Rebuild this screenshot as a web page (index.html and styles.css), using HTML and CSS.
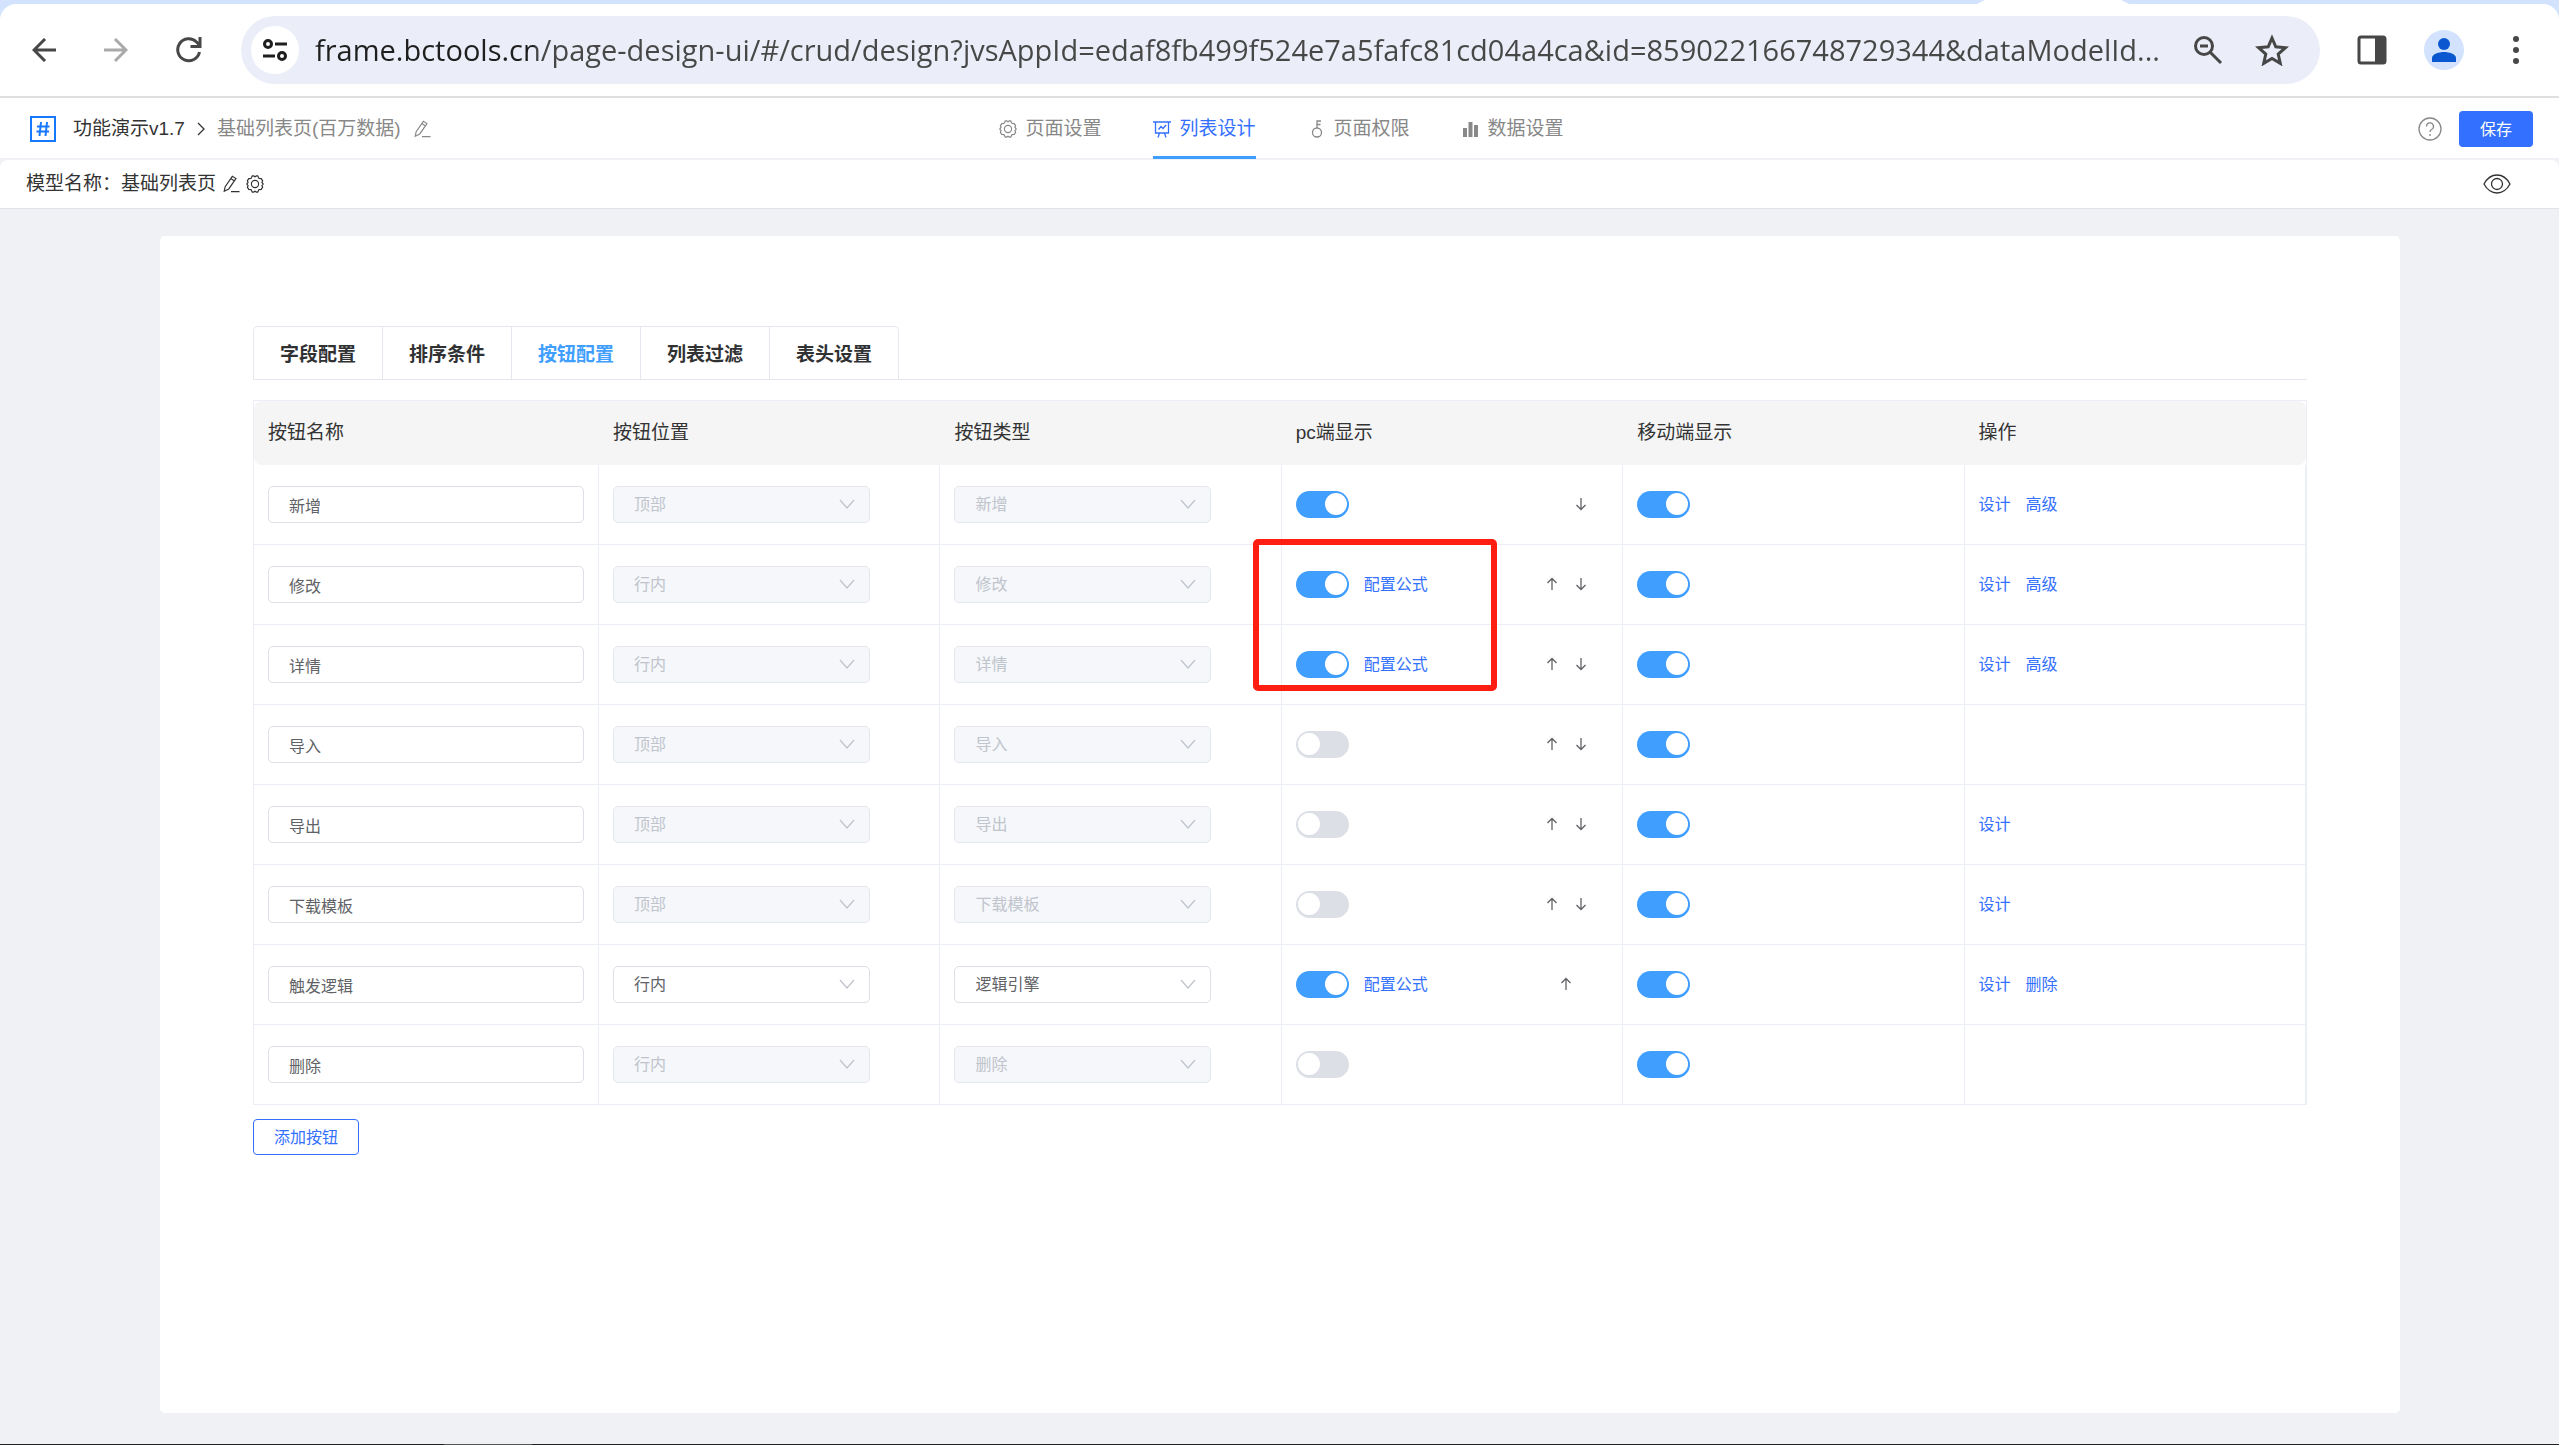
FILE: index.html
```
<!DOCTYPE html>
<html lang="zh-CN">
<head>
<meta charset="UTF-8">
<meta name="viewport" content="width=device-width, initial-scale=1.0">
<title>基础列表页</title>
<link rel="stylesheet" href="styles.css">
</head>
<body>
    <!-- icons used more than once -->
    <svg class="sprite" aria-hidden="true">
        <symbol id="i-edit" viewBox="0 0 20 20"><path d="M2.500 18l1-5L11.500 1.500l4 2.500L7.500 15.500zM9.800 4l4 2.600M10 18.500h9.500"/></symbol>
        <symbol id="i-gear" viewBox="0 0 20 20"><path d="M7 1h1.500l1.500 1 1.500-1H13l1.500 2.800 2.500.2 1.500 2.500-.8 1.800L19.200 10l-1.500 1.700.8 1.800L17 16l-2.500.2L13 19h-1.500L10 18l-1.500 1H7l-1.500-2.800L3 16l-1.500-2.500.8-1.800L.8 10l1.500-1.700-.8-1.800L3 4l2.500-.2z"/><circle cx="10" cy="10" r="4"/></symbol>
        <symbol id="i-down" viewBox="0 0 16 16"><path d="M1 4l7 8 7-8"/></symbol>
        <symbol id="i-arrow-up" viewBox="0 0 16 16"><path d="M8 14V2.500M3.500 7L8 2.500 12.500 7"/></symbol>
        <symbol id="i-arrow-down" viewBox="0 0 16 16"><path d="M8 2v11.500M3.500 9L8 13.500 12.500 9"/></symbol>
    </svg>

    <div class="browser">
        <div class="tab-strip"><span class="tab-gap"></span></div>
        <div class="toolbar">
            <button class="tool" aria-label="后退"><svg width="24" height="24" viewBox="0 0 24 24"><path d="M24 12H2M13 1L2 12l11 11"/></svg></button>
            <button class="tool off" aria-label="前进"><svg width="24" height="24" viewBox="0 0 24 24"><path d="M0 12h22M11 1l11 11-11 11"/></svg></button>
            <button class="tool" aria-label="刷新"><svg width="26" height="26" viewBox="0 0 26 26"><path d="M23.500 15A11 11 0 1 1 20.500 5l4 4M24 0v9.500h-9.500"/></svg></button>
            <div class="omnibox">
                <button class="site" aria-label="网站信息"><svg width="26" height="24" viewBox="0 0 26 24"><circle cx="6" cy="6" r="3.500"/><path d="M13 6h12M1 18h12"/><circle cx="20" cy="18" r="3.500"/></svg></button>
                <input class="url" type="text" aria-label="地址" readonly value="frame.bctools.cn/page-design-ui/#/crud/design?jvsAppId=edaf8fb499f524e7a5fafc81cd04a4ca&amp;id=859022166748729344&amp;dataModelId...">
                <button class="tool" aria-label="缩放"><svg width="30" height="30" viewBox="0 0 30 30"><circle cx="11" cy="11" r="8.500"/><path d="M17 17l11 11M7 11h8"/></svg></button>
                <button class="tool" aria-label="收藏"><svg width="34" height="32" viewBox="0 0 34 32"><path d="M17 4l3.800 8.800 9.600.9-7.200 6.300 2.100 9.400L17 24.500l-8.300 4.900L10.800 20l-7.200-6.300 9.600-.9z"/></svg></button>
            </div>
            <button class="tool" aria-label="侧边栏"><svg width="30" height="30" viewBox="0 0 30 30"><rect x="2" y="2" width="26" height="26" rx="2"/><path class="solid" d="M18 2h10v26H18z"/></svg></button>
            <button class="avatar" aria-label="用户"><svg width="24" height="24" viewBox="0 0 24 24"><circle cx="12" cy="6" r="6"/><path d="M0 24v-4c0-4 7-6 12-6s12 2 12 6v4z"/></svg></button>
            <button class="tool" aria-label="更多"><svg width="8" height="30" viewBox="0 0 8 30"><g class="solid"><circle cx="4" cy="4" r="3"/><circle cx="4" cy="15" r="3"/><circle cx="4" cy="26" r="3"/></g></svg></button>
        </div>
    </div>

    <header class="app-header">
        <div class="crumbs">
            <svg class="logo" width="26" height="26" viewBox="0 0 26 26"><rect x="1" y="1" width="24" height="24"/><path d="M11 6l-1.500 14M17 6l-1.500 14M7 10.500h12.500M6.500 15.500H19"/></svg>
            <span>功能演示v1.7</span>
            <svg class="icon" width="8" height="14" viewBox="0 0 8 14"><path d="M1 1l6 6-6 6"/></svg>
            <span class="muted">基础列表页(百万数据)</span>
            <svg class="icon muted" width="18" height="18"><use href="#i-edit"/></svg>
        </div>
        <nav class="menu">
            <a href="#page"><svg class="icon" width="18" height="18"><use href="#i-gear"/></svg>页面设置</a>
            <a href="#list" class="active"><svg class="icon" width="18" height="18" viewBox="0 0 18 18"><path d="M0 2h18M2.500 2v11h13V2M6.500 13L5 17.500M11.500 13l1.500 4.500M5.500 9.500l2.500-3 2 2 3-3.500"/></svg>列表设计</a>
            <a href="#auth"><svg class="icon" width="18" height="18" viewBox="0 0 18 18"><circle cx="9" cy="12.500" r="4.500"/><path d="M9 8V1h4M9 4.500h3.500"/></svg>页面权限</a>
            <a href="#data"><svg class="icon fill" width="18" height="18" viewBox="0 0 18 18"><path d="M1 8h4v9H1zM6.500 2h4v15h-4zM12 5h4v12h-4z"/></svg>数据设置</a>
        </nav>
        <div class="actions">
            <svg class="icon muted" width="24" height="24" viewBox="0 0 24 24"><circle cx="12" cy="12" r="11"/><path d="M8.500 9.500a3.500 3.500 0 1 1 5 3c-1 .6-1.500 1.200-1.500 2.500M12 17v2"/></svg>
            <button class="save">保存</button>
        </div>
    </header>

    <div class="model-bar">
        <span>模型名称：基础列表页</span>
        <svg class="icon" width="18" height="18"><use href="#i-edit"/></svg>
        <svg class="icon" width="18" height="18"><use href="#i-gear"/></svg>
        <svg class="icon eye" width="28" height="20" viewBox="0 0 28 20"><path d="M1 10c3-5.500 7.500-9 13-9s10 3.500 13 9c-3 5.500-7.500 9-13 9S4 15.500 1 10z"/><circle cx="14" cy="10" r="5.500"/></svg>
    </div>

    <main class="card">
        <div class="tabs">
            <button>字段配置</button>
            <button>排序条件</button>
            <button class="active">按钮配置</button>
            <button>列表过滤</button>
            <button>表头设置</button>
        </div>
        <div class="table-box">
            <table>
                <thead>
                    <tr>
                        <th class="first">按钮名称</th>
                        <th>按钮位置</th>
                        <th>按钮类型</th>
                        <th>pc端显示</th>
                        <th>移动端显示</th>
                        <th>操作</th>
                    </tr>
                </thead>
                <tbody id="rows"></tbody>
            </table>
            <div class="mark"></div>
        </div>
        <button class="add">添加按钮</button>
    </main>
    <div class="taskbar"><span></span></div>

<script src="script.js"></script>
</body>
</html>
```
FILE: styles.css
```
* {
    box-sizing: border-box;
}

body {
    margin: 0;
    min-height: 100vh;
    display: flex;
    flex-direction: column;
    background: #f0f1f5;
    color: #333;
    font-family: "Liberation Sans", "Noto Sans CJK SC", sans-serif;
    font-size: 19px;
    line-height: 24px;
}

button, input, select {
    font-family: inherit;
    margin: 0;
}

button {
    border: none;
    background: none;
    padding: 0;
    color: inherit;
    cursor: pointer;
}

a {
    color: #3370ff;
    text-decoration: none;
}

svg {
    display: block;
    flex: none;
}

.sprite {
    position: absolute;
    width: 0;
    height: 0;
}

.icon {
    fill: none;
    stroke: currentColor;
    stroke-width: 1.3;
}

.icon.fill {
    fill: currentColor;
    stroke: none;
}

.muted {
    color: #888;
}

/* browser */
.browser {
    background: #d3e3fd;
    border-bottom: 2px solid #e0e0e0;
}

.tab-strip {
    height: 4px;
    display: flex;
    justify-content: flex-end;
    padding-right: 430px;
}

.tab-gap {
    width: 152px;
    background: #fff;
    clip-path: polygon(8px 0, 144px 0, 100% 100%, 0 100%);
}

.toolbar {
    height: 92px;
    display: flex;
    align-items: center;
    background: #fff;
    border-radius: 16px 16px 0 0;
    padding: 0 39px 0 32px;
}

.tool svg {
    fill: none;
    stroke: #474747;
    stroke-width: 3;
}

.tool .solid {
    fill: #474747;
    stroke: none;
}

.tool.off svg {
    stroke: #aaa;
}

.toolbar > .tool + .tool {
    margin-left: 48px;
}

.omnibox {
    flex: 1;
    height: 68px;
    margin: 0 37px 0 39px;
    padding: 0 31px 0 10px;
    display: flex;
    align-items: center;
    border-radius: 34px;
    background: #ebeef8;
}

.omnibox .tool + .tool {
    margin-left: 32px;
}

.site {
    width: 48px;
    height: 48px;
    display: flex;
    align-items: center;
    justify-content: center;
    border-radius: 50%;
    background: #fff;
}

.site svg {
    fill: none;
    stroke: #1f1f1f;
    stroke-width: 3;
}

/* the host part is darker than the path */
.url {
    flex: 1;
    min-width: 0;
    height: 44px;
    margin: 0 20px 0 16px;
    padding: 0 0 2px;
    border: none;
    background: linear-gradient(to right, #1f1f1f 220px, #474747 220px);
    -webkit-background-clip: text;
    background-clip: text;
    -webkit-text-fill-color: transparent;
    font-family: "Open Sans", sans-serif;
    font-size: 29px;
}

.avatar {
    width: 40px;
    height: 40px;
    margin: 0 48px 0 37px;
    display: flex;
    align-items: center;
    justify-content: center;
    border-radius: 50%;
    background: #d3e3fd;
}

.avatar svg {
    fill: #0b57d0;
}

/* app header */
.app-header {
    height: 62px;
    display: grid;
    grid-template-columns: 1fr auto 1fr;
    align-items: center;
    padding: 0 26px 0 30px;
    background: #fff;
    border-bottom: 2px solid #f0f1f5;
}

.crumbs {
    display: flex;
    align-items: center;
    gap: 12px;
}

.logo {
    margin-right: 5px;
    fill: none;
    stroke: #1677ff;
    stroke-width: 2;
}

.menu {
    align-self: stretch;
    display: flex;
    gap: 52px;
}

.menu a {
    height: 61px;
    display: flex;
    align-items: center;
    gap: 8px;
    color: #888;
    border-bottom: 3px solid transparent;
    border-top: 3px solid transparent;
}

.menu a.active {
    color: #3370ff;
    border-bottom-color: #409eff;
}

.actions {
    display: flex;
    align-items: center;
    justify-content: flex-end;
    gap: 17px;
}

.save {
    height: 36px;
    padding: 0 21px 2px;
    border-radius: 4px;
    background: #3370ff;
    color: #fff;
    font-size: 16px;
}

.model-bar {
    height: 49px;
    display: flex;
    align-items: center;
    gap: 6px;
    padding: 0 48px 0 26px;
    background: #fff;
    border-bottom: 1px solid #e1e3ea;
    border-radius: 8px 8px 0 0;
}

.eye {
    margin-left: auto;
}

/* content */
.card {
    flex: 1;
    margin: 27px 159px 31px 160px;
    padding: 90px 93px;
    background: #fff;
    border-radius: 5px;
}

.tabs {
    display: flex;
    border-bottom: 1px solid #e4e7ed;
    margin-bottom: 20px;
}

.tabs button {
    height: 53px;
    padding: 0 26px 2px;
    border: 1px solid #e4e7ed;
    border-width: 1px 1px 0 0;
    color: #303133;
    font-size: 19px;
    font-weight: bold;
}

.tabs button:first-child {
    border-left-width: 1px;
    border-top-left-radius: 5px;
}

.tabs button:last-child {
    border-top-right-radius: 5px;
}

.tabs .active {
    color: #409eff;
}

.table-box {
    position: relative;
}

table {
    width: 100%;
    table-layout: fixed;
    border-collapse: separate;
    border-spacing: 0;
    border: 1px solid #ebeef5;
    border-bottom: none;
}

th {
    height: 64px;
    padding: 0 14px;
    background: #f5f5f5;
    font-weight: normal;
    text-align: left;
}

th.first {
    width: 345px;
    border-radius: 8px 0 0 8px;
}

th:last-child {
    border-radius: 0 8px 8px 0;
}

td {
    height: 80px;
    padding: 0 14px;
    border-right: 1px solid #ebeef5;
    border-bottom: 1px solid #ebeef5;
    font-size: 16px;
}

td a + a {
    margin-left: 15px;
}

.name, .select select {
    display: block;
    width: 100%;
    height: 37px;
    padding: 0 20px;
    border: 1px solid #dcdfe6;
    border-radius: 5px;
    background: #fff;
    color: #606266;
    font-size: 16px;
}

.select {
    position: relative;
    width: 257px;
    max-width: 100%;
}

.select select {
    appearance: none;
}

.select select:disabled {
    background: #f5f7fa;
    border-color: #e4e7ed;
    color: #c0c4cc;
    opacity: 1;
}

.select .icon {
    position: absolute;
    top: 10px;
    right: 15px;
    color: #c0c4cc;
    pointer-events: none;
}

.show {
    display: flex;
    align-items: center;
    gap: 15px;
}

.switch {
    appearance: none;
    display: block;
    flex: none;
    width: 53px;
    height: 27px;
    padding: 2px;
    border-radius: 14px;
    background: #dcdfe6;
}

.switch::before {
    content: "";
    display: block;
    width: 22px;
    height: 22px;
    border-radius: 50%;
    background: #fff;
}

.switch:checked {
    background: #409eff;
}

.switch:checked::before {
    margin-left: auto;
}

.moves {
    width: 58px;
    margin: 0 13px 2px auto;
    display: flex;
    justify-content: center;
    gap: 13px;
    color: #606266;
}

.moves.end {
    justify-content: flex-end;
    padding-right: 6px;
}

.add {
    height: 36px;
    margin-top: 14px;
    padding: 0 20px 2px;
    border: 1px solid #3370ff;
    border-radius: 4px;
    color: #3370ff;
    font-size: 16px;
}

/* red frame round the formula links */
.mark {
    position: absolute;
    top: 139px;
    left: 1000px;
    width: 244px;
    height: 152px;
    border: 6px solid #ff1e12;
    border-radius: 5px;
}

.taskbar {
    height: 1px;
    background: #222;
}

.taskbar span {
    display: block;
    width: 88px;
    height: 1px;
    margin-left: 444px;
    background: #555;
}
```
FILE: script.js
```
const rows = [
    { name: '新增', pos: '顶部', type: '新增', pc: true, down: true, ops: ['设计', '高级'] },
    { name: '修改', pos: '行内', type: '修改', pc: true, formula: true, up: true, down: true, ops: ['设计', '高级'] },
    { name: '详情', pos: '行内', type: '详情', pc: true, formula: true, up: true, down: true, ops: ['设计', '高级'] },
    { name: '导入', pos: '顶部', type: '导入', up: true, down: true, ops: [] },
    { name: '导出', pos: '顶部', type: '导出', up: true, down: true, ops: ['设计'] },
    { name: '下载模板', pos: '顶部', type: '下载模板', up: true, down: true, ops: ['设计'] },
    { name: '触发逻辑', pos: '行内', type: '逻辑引擎', custom: true, pc: true, formula: true, up: true, ops: ['设计', '删除'] },
    { name: '删除', pos: '行内', type: '删除', ops: [] }
];

function select(label, value, enabled) {
    return `<div class="select">
        <select aria-label="${label}" ${enabled ? '' : 'disabled'}><option>${value}</option></select>
        <svg class="icon" width="16" height="16"><use href="#i-down"/></svg>
    </div>`;
}

function toggle(label, on) {
    return `<input class="switch" type="checkbox" aria-label="${label}" ${on ? 'checked' : ''}>`;
}

function arrow(dir) {
    return `<button aria-label="${dir === 'up' ? '上移' : '下移'}"><svg class="icon" width="16" height="16"><use href="#i-arrow-${dir}"/></svg></button>`;
}

document.getElementById('rows').innerHTML = rows.map(row => `
    <tr>
        <td><input class="name" type="text" aria-label="按钮名称" value="${row.name}"></td>
        <td>${select('按钮位置', row.pos, row.custom)}</td>
        <td>${select('按钮类型', row.type, row.custom)}</td>
        <td>
            <div class="show">
                ${toggle('pc端显示', row.pc)}
                ${row.formula ? '<a href="#formula">配置公式</a>' : ''}
                <div class="moves ${row.up ? '' : 'end'}">
                    ${row.up ? arrow('up') : ''}
                    ${row.down ? arrow('down') : ''}
                </div>
            </div>
        </td>
        <td>${toggle('移动端显示', true)}</td>
        <td>${row.ops.map(op => `<a href="#op">${op}</a>`).join('')}</td>
    </tr>`).join('');
```
